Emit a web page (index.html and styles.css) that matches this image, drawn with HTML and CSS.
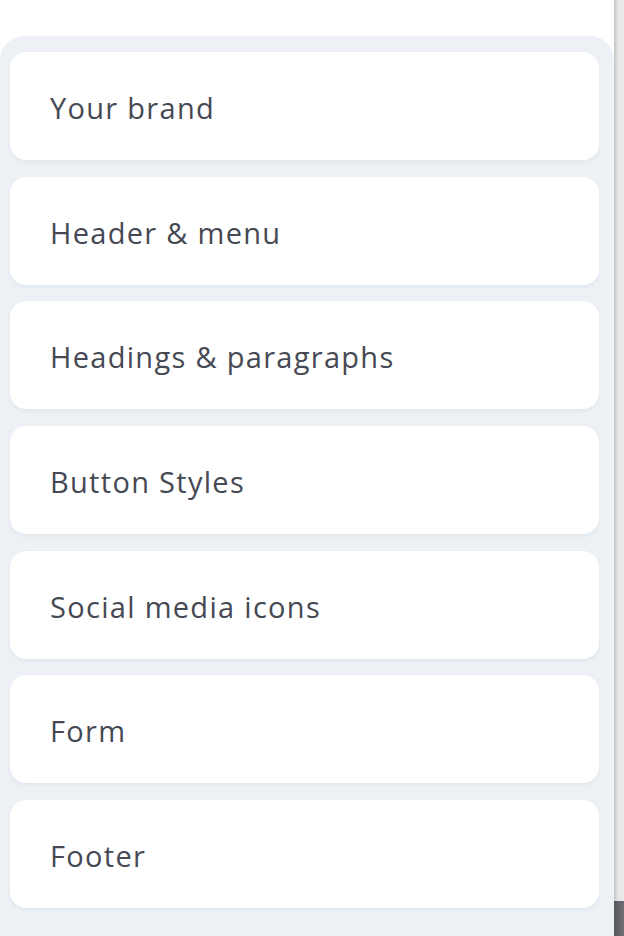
FILE: index.html
```html
<!DOCTYPE html>
<html lang="en">
<head>
  <meta charset="UTF-8">
  <title>Theme settings</title>
  <link rel="stylesheet" href="styles.css">
</head>
<body>
  <div class="tela">
    <div class="conteudo">
      <div class="secoes">
        <div class="secao">Your brand</div>
        <div class="secao">Header &amp; menu</div>
        <div class="secao">Headings &amp; paragraphs</div>
        <div class="secao">Button Styles</div>
        <div class="secao">Social media icons</div>
        <div class="secao">Form</div>
        <div class="secao">Footer</div>
      </div>
    </div>
    <div class="barra">
      <div class="barra-trilho"></div>
      <div class="barra-polegar"></div>
    </div>
  </div>
</body>
</html>
```

FILE: styles.css
```css
html, body {
  margin: 0;
  height: 100%;
}
body {
  font-family: "Open Sans", Lato, sans-serif;
  background: #ffffff;
  color: #464953;
  overflow: hidden;
}
.tela {
  display: flex;
  height: 936px;
}
.conteudo {
  flex: 1;
  padding-top: 36px;
}
.secoes {
  background-color: #edf1f6;
  border-radius: 24px 24px 0 0;
  padding: 16px 15px 40px 10px;
  display: flex;
  flex-direction: column;
  gap: 16.67px;
}
.secao {
  background-color: #ffffff;
  border-radius: 16px;
  box-shadow: 0 2px 4px rgba(40, 60, 90, 0.06);
  padding: 38px 40px 34px;
  font-size: 29px;
  line-height: 36px;
  letter-spacing: 1.3px;
}
.barra {
  width: 10px;
  display: flex;
  flex-direction: column;
}
.barra-trilho {
  flex: 1;
  background: linear-gradient(to right, #c4c4c4, #e6e6e6 40%, #ececec);
}
.barra-polegar {
  height: 35px;
  background: linear-gradient(to right, #55575c, #6d6f74);
}
```
